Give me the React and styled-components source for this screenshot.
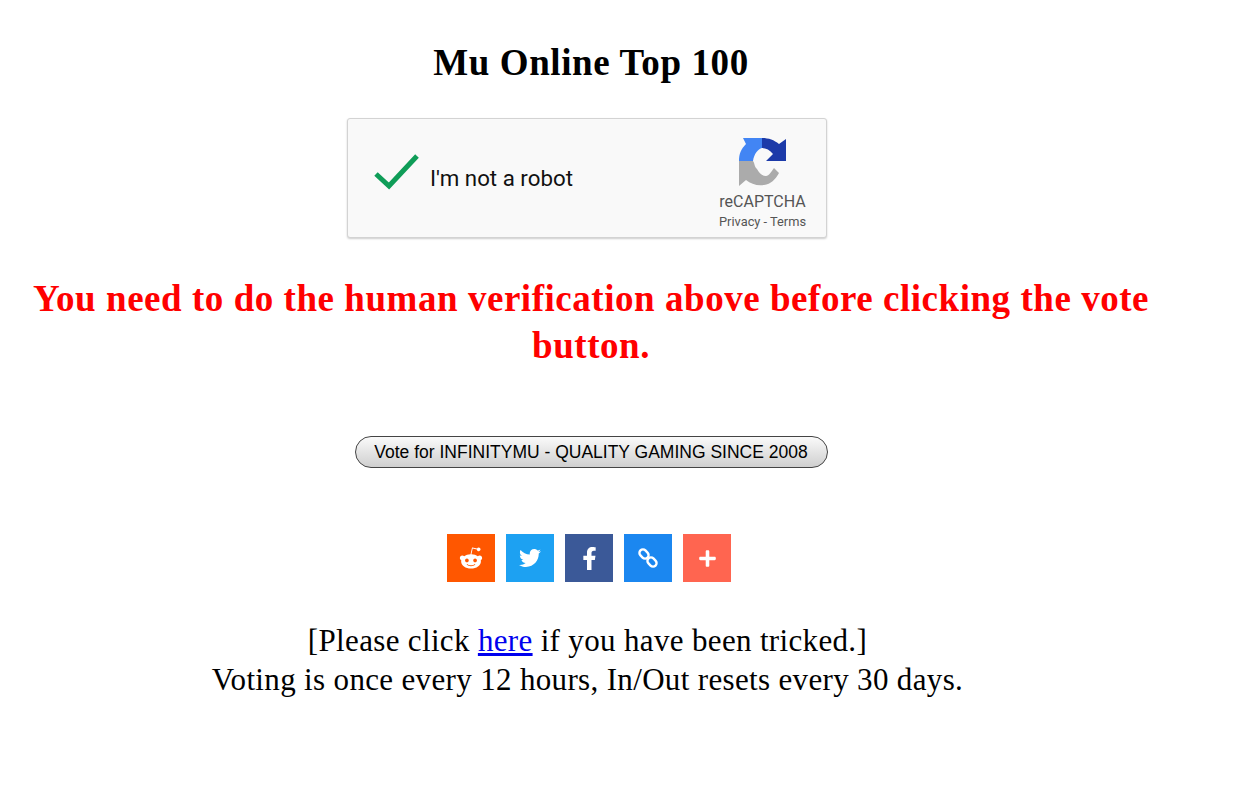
import React from "react";
import styled, { createGlobalStyle } from "styled-components";
import { FaRedditAlien, FaTwitter, FaFacebookF, FaPlus } from "react-icons/fa";

const Global = createGlobalStyle`
  html, body { margin: 0; padding: 0; background: #fff; }
  body { font-family: "Liberation Serif", "Times New Roman", serif; color: #000; }
`;
const Page = styled.main`
  width: 1182px;
  height: 809px;
  padding-top: 39px;
  box-sizing: border-box;
  display: flex;
  flex-direction: column;
  align-items: center;
  text-align: center;
  overflow: hidden;
`;
const Title = styled.h1`
  margin: 0;
  font-size: 37px;
  line-height: 47px;
  font-weight: 700;
  letter-spacing: 0.6px;
`;
const Captcha = styled.div`
  width: 480px;
  height: 120px;
  margin: 32px 8px 0 0;
  box-sizing: border-box;
  background: #f9f9f9;
  border: 1px solid #d3d3d3;
  border-radius: 3px;
  box-shadow: 0 1px 2px rgba(0,0,0,.2);
  display: flex;
  align-items: flex-start;
  padding: 0 20px 0 26px;
  font-family: Roboto, "Liberation Sans", sans-serif;
`;
const Check = styled.svg`
  width: 46px;
  height: 38px;
  flex: none;
  margin-top: 34px;
`;
const Label = styled.span`
  margin: 46px 0 0 10px;
  font-size: 22.3px;
  line-height: 26px;
  color: #111;
  flex: 1;
  text-align: left;
`;
const Brand = styled.div`
  display: flex;
  flex-direction: column;
  align-items: center;
  color: #555;
  padding-top: 17px;
`;
const BrandLogo = styled.svg`
  width: 50px;
  height: 50px;
`;
const BrandName = styled.span`
  font-size: 16px;
  line-height: 20px;
  margin-top: 6px;
`;
const BrandLinks = styled.span`
  font-size: 12.8px;
  line-height: 16px;
  margin-top: 2px;
`;
const Warning = styled.h2`
  margin: 37px 0 0;
  font-size: 37px;
  line-height: 47px;
  font-weight: 700;
  color: #f00;
  letter-spacing: 0.54px;
`;
const VoteButton = styled.button`
  width: 473px;
  height: 32px;
  margin-top: 67px;
  padding: 0;
  border: 1px solid #444;
  border-radius: 16px;
  background: linear-gradient(#fafafa, #cfcfcf);
  font-family: "Liberation Sans", Arial, sans-serif;
  font-size: 17.5px;
  color: #000;
`;
const Share = styled.div`
  display: flex;
  gap: 11px;
  margin: 66px 4px 0 0;
`;
const ShareLink = styled.a`
  width: 48px;
  height: 48px;
  display: flex;
  align-items: center;
  justify-content: center;
  color: #fff;
  background: ${p => p.$bg};
  font-size: ${p => p.$size}px;
`;
const LinkIcon = styled.svg`
  width: 24px;
  height: 24px;
`;
const Note = styled.p`
  margin: 39px 7px 0 0;
  font-size: 31px;
  line-height: 39px;
  letter-spacing: 0.34px;
  a { color: #00e; }
`;

const ChainIcon = () => (
  <LinkIcon viewBox="0 0 24 24" fill="none" stroke="currentColor" strokeWidth="2.4">
    <rect x="3" y="4.5" width="10" height="7" rx="3.5" transform="rotate(45 8 8)" />
    <rect x="11" y="12.5" width="10" height="7" rx="3.5" transform="rotate(45 16 16)" />
  </LinkIcon>
);

const shares = [
  { bg: "#ff5700", Icon: FaRedditAlien, size: 24 },
  { bg: "#1da1f2", Icon: FaTwitter, size: 22 },
  { bg: "#3b5998", Icon: FaFacebookF, size: 23 },
  { bg: "#1b87f0", Icon: ChainIcon, size: 22 },
  { bg: "#ff6550", Icon: FaPlus, size: 19 },
];

export default function App() {
  return (
    <Page>
      <Global />
      <Title>Mu Online Top 100</Title>
      <Captcha>
        <Check viewBox="0 0 46 38">
          <path d="M2 21 L15 33 L43 3" fill="none" stroke="#0f9d58" strokeWidth="5" />
        </Check>
        <Label>I'm not a robot</Label>
        <Brand>
          <BrandLogo viewBox="0 0 50 50">
            <path d="M5 2 L24 2 L24 12 C20 13 16 18 15 25 L1 25 C1 18 3 13 8 8Z" fill="#4285f4" />
            <path d="M24 2 C31 2 36 4 41 8 L48 3 L48 25 L28 25 L35 18 C32 14 28 12 24 12Z" fill="#1c3aa9" />
            <path d="M1 25 L15 25 C17 28 16 30 19 33 C21 37 24 40 28 40 C31 40 33 36 36 32 L41 37 C37 44 33 48 26 49 C19 50 13 48 8 44 L1 50Z" fill="#ababab" />
          </BrandLogo>
          <BrandName>reCAPTCHA</BrandName>
          <BrandLinks>Privacy - Terms</BrandLinks>
        </Brand>
      </Captcha>
      <Warning>You need to do the human verification above before clicking the vote button.</Warning>
      <VoteButton>Vote for INFINITYMU - QUALITY GAMING SINCE 2008</VoteButton>
      <Share>
        {shares.map(({ bg, Icon, size }) => (
          <ShareLink key={bg} $bg={bg} $size={size}><Icon /></ShareLink>
        ))}
      </Share>
      <Note>
        [Please click <a href="#here">here</a> if you have been tricked.]<br />
        Voting is once every 12 hours, In/Out resets every 30 days.
      </Note>
    </Page>
  );
}
